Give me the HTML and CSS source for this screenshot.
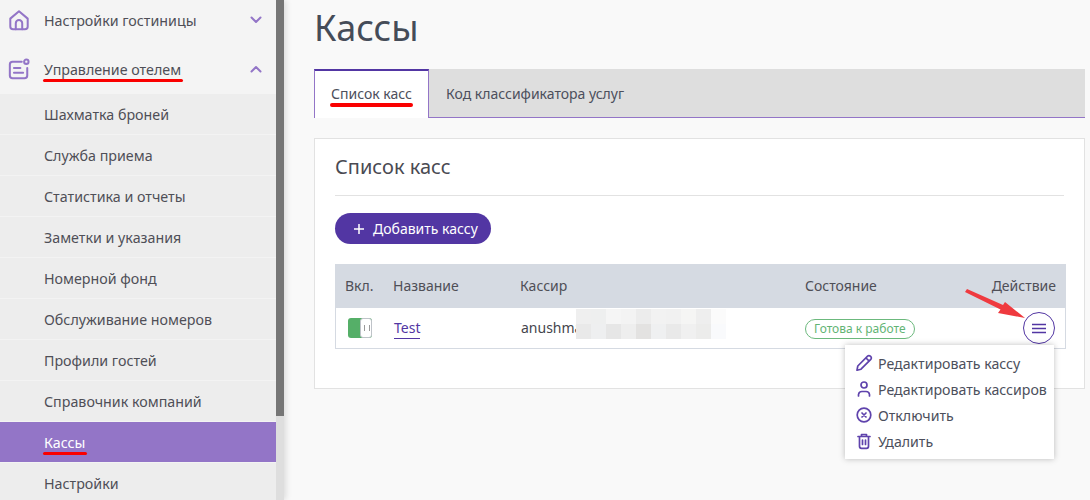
FILE: index.html
```html
<!DOCTYPE html>
<html lang="ru">
<head>
<meta charset="utf-8">
<title>Кассы</title>
<link rel="stylesheet" href="styles.css">
</head>
<body>
<div class="app">
  <aside class="sidebar">
    <nav class="menu">
      <div class="group">
        <svg class="gicon" viewBox="0 0 24 24" fill="none" stroke="#9375c7" stroke-width="2.2" stroke-linejoin="round" stroke-linecap="round"><path d="M2.5 10.5 12 2.5l9.5 8V19a3 3 0 0 1-3 3h-13a3 3 0 0 1-3-3z"/><path d="M8.5 22v-6.5a3.5 3.5 0 0 1 7 0V22"/></svg>
        <span class="glabel">Настройки гостиницы</span>
        <svg class="chev" viewBox="0 0 12 8" fill="none" stroke="#9375c7" stroke-width="2" stroke-linecap="round" stroke-linejoin="round"><path d="M1.5 1.5 6 6l4.5-4.5"/></svg>
      </div>
      <div class="group">
        <svg class="gicon" viewBox="0 0 24 24" fill="none" stroke="#9375c7" stroke-width="2.2" stroke-linecap="round" stroke-linejoin="round"><path d="M15 4H5a3 3 0 0 0-3 3v12a3 3 0 0 0 3 3h13a3 3 0 0 0 3-3v-8"/><circle cx="20" cy="4" r="2.4"/><path d="M6.5 11h7M6.5 16h10"/></svg>
        <span class="glabel"><span class="mark">Управление отелем</span></span>
        <svg class="chev" viewBox="0 0 12 8" fill="none" stroke="#9375c7" stroke-width="2" stroke-linecap="round" stroke-linejoin="round"><path d="M1.5 6.5 6 2l4.5 4.5"/></svg>
      </div>
      <ul class="submenu">
        <li>Шахматка броней</li>
        <li>Служба приема</li>
        <li>Статистика и отчеты</li>
        <li>Заметки и указания</li>
        <li>Номерной фонд</li>
        <li>Обслуживание номеров</li>
        <li>Профили гостей</li>
        <li>Справочник компаний</li>
        <li class="active"><span class="mark">Кассы</span></li>
        <li>Настройки</li>
      </ul>
    </nav>
    <div class="scrollbar"><div class="thumb"></div></div>
  </aside>
  <main class="content">
    <h1 class="title">Кассы</h1>
    <div class="tabs">
      <div class="tab tab-active"><span class="mark">Список касс</span></div>
      <div class="tab">Код классификатора услуг</div>
    </div>
    <section class="panel">
      <h2 class="panel-title">Список касс</h2>
      <button class="add-btn"><svg class="plus" viewBox="0 0 12 12" fill="none" stroke="#fff" stroke-width="1.5"><path d="M6 1v10M1 6h10"/></svg>Добавить кассу</button>
      <div class="table">
        <div class="row head">
          <div>Вкл.</div>
          <div>Название</div>
          <div>Кассир</div>
          <div>Состояние</div>
          <div class="right">Действие</div>
        </div>
        <div class="row body">
          <div><span class="switch"><span class="knob"></span></span></div>
          <div class="lifted"><a class="link">Test</a></div>
          <div class="cashier lifted">anushma
            <svg class="blur" viewBox="0 0 10 2" shape-rendering="crispEdges">
              <rect x="0" y="0" width="1" height="1" fill="#efefef"/><rect x="1" y="0" width="1" height="1" fill="#eeefef"/><rect x="2" y="0" width="1" height="1" fill="#f5f5f5"/><rect x="3" y="0" width="1" height="1" fill="#f3f3f3"/><rect x="4" y="0" width="1" height="1" fill="#ececec"/><rect x="5" y="0" width="1" height="1" fill="#f2f2f2"/><rect x="6" y="0" width="1" height="1" fill="#f1f1f1"/><rect x="7" y="0" width="1" height="1" fill="#f5f5f4"/><rect x="8" y="0" width="1" height="1" fill="#eeeeee"/><rect x="9" y="0" width="1" height="1" fill="#fbfbfb"/>
              <rect x="0" y="1" width="1" height="1" fill="#e9e9e9"/><rect x="1" y="1" width="1" height="1" fill="#eeeff0"/><rect x="2" y="1" width="1" height="1" fill="#e6e6e6"/><rect x="3" y="1" width="1" height="1" fill="#eeeeee"/><rect x="4" y="1" width="1" height="1" fill="#e3e2e1"/><rect x="5" y="1" width="1" height="1" fill="#eff0f1"/><rect x="6" y="1" width="1" height="1" fill="#e9e9e9"/><rect x="7" y="1" width="1" height="1" fill="#f0f0f0"/><rect x="8" y="1" width="1" height="1" fill="#ececeb"/><rect x="9" y="1" width="1" height="1" fill="#f9fafc"/>
            </svg>
          </div>
          <div><span class="badge">Готова к работе</span></div>
          <div class="right"><span class="action"><svg class="burger" viewBox="0 0 14 11" fill="none" stroke="#5236a3" stroke-width="1.6"><path d="M0 1.5h14M0 5.5h14M0 9.5h14"/></svg></span></div>
        </div>
        <svg class="arrow" viewBox="0 0 60 30"><path d="M0 3 2 0 38 16 40 13 60 29 33 24 35.500 20.500z" fill="#ef3a3f"/></svg>
        <ul class="dropdown">
          <li><svg class="ddicon" viewBox="0 0 18 18" fill="none" stroke="#5f43ac" stroke-width="1.7" stroke-linejoin="round"><path d="M2 16.200l.8-4.200L12.600 2.200a1.900 1.900 0 0 1 2.700 0l.5.5a1.900 1.900 0 0 1 0 2.700L6 15.200z"/><path d="M11 4l3.200 3.200"/></svg>Редактировать кассу</li>
          <li><svg class="ddicon" viewBox="0 0 18 18" fill="none" stroke="#5f43ac" stroke-width="1.7" stroke-linecap="round"><circle cx="9" cy="5" r="3"/><path d="M3.500 16v-1.500a3.500 3.500 0 0 1 3.500-3h4a3.500 3.500 0 0 1 3.500 3V16"/></svg>Редактировать кассиров</li>
          <li><svg class="ddicon" viewBox="0 0 18 18" fill="none" stroke="#5f43ac" stroke-width="1.7" stroke-linecap="round"><circle cx="9" cy="9" r="6.800"/><path d="M7 7l4 4M11 7l-4 4"/></svg>Отключить</li>
          <li><svg class="ddicon" viewBox="0 0 18 18" fill="none" stroke="#5f43ac" stroke-width="1.7" stroke-linecap="round" stroke-linejoin="round"><path d="M3 4.500h12M6.500 4.500V2.500h5v2M4.500 4.500v9.800a2 2 0 0 0 2 2h5a2 2 0 0 0 2-2V4.500M7.500 8v4.500M10.500 8v4.500"/></svg>Удалить</li>
        </ul>
      </div>
    </section>
  </main>
</div>
</body>
</html>
```

FILE: styles.css
```css
* { box-sizing: border-box; }
html, body { margin: 0; height: 100%; overflow: hidden; }
body { font-family: "Noto Sans", "Open Sans", sans-serif; color: #4a4a52; background: #f9f9f9; }
ul { list-style: none; margin: 0; padding: 0; }

.app { display: flex; height: 500px; overflow: hidden; }

.sidebar { width: 284px; flex: none; display: flex; height: 500px; box-shadow: 2px 0 6px rgba(0,0,0,.12); z-index: 1; }
.menu { width: 276px; flex: none; background: #f4f4f4; margin-top: -4px; height: 504px; overflow: hidden; }
.group { height: 49px; display: flex; align-items: center; padding: 0 14px 1px 8px; font-size: 14.25px; color: #4f4f57; }
.gicon { width: 22px; height: 22px; flex: none; margin-right: 14px; }
.glabel { flex: 1; }
.chev { width: 12px; height: 8px; flex: none; }

.submenu { background: #ededed; }
.submenu li { height: 41px; display: flex; align-items: center; padding-left: 44px; font-size: 14.25px; color: #4f4f57; border-bottom: 1px solid #f3f3f3; }
.submenu li.active { background: #9375c7; color: #fff; }

.mark { position: relative; display: inline-block; }
.mark::after { content: ""; position: absolute; left: -1.5px; right: -1.5px; bottom: -3.5px; height: 3.5px; border-radius: 2px; background: #fa0000; }

.scrollbar { width: 8px; flex: none; background: #dedede; }
.thumb { height: 416px; background: #767676; }

.content { flex: 1; min-width: 0; padding: 0 5px 0 30px; }
.title { margin: 3px 0 0; height: 66px; font-size: 36px; font-weight: 400; line-height: 49px; color: #454c58; }

.tabs { display: flex; height: 49px; background: #dedede; border-bottom: 1px solid #9375c7; font-size: 14px; }
.tab { padding: 0 17px; display: flex; align-items: center; color: #4c4f5c; }
.tab-active { height: 49px; width: 115px; background: #fff; border: 1px solid #9375c7; border-top: 2px solid #5236a3; border-bottom: 0; padding: 0 16px 2px; }

.panel { margin-top: 20px; height: 251px; background: #fff; border: 1px solid #e2e2e2; padding: 0 20px; }
.panel-title { margin: 0; height: 57px; border-bottom: 1px solid #e2e2e2; font-size: 20px; font-weight: 400; line-height: 56px; color: #4a4a52; }

.add-btn { display: flex; align-items: center; margin-top: 17px; height: 31px; width: 156px; padding: 0 0 0 18px; border: 0; border-radius: 16px; background: #5236a3; color: #fff; font-family: inherit; font-size: 14px; }
.plus { width: 12px; height: 12px; margin-right: 8px; }

.table { position: relative; margin-top: 20px; width: 731px; }
.row { display: grid; grid-template-columns: 48px 127px 285px 1fr 120px; align-items: center; padding: 0 10px; font-size: 14px; }
.head { height: 44px; padding-bottom: 2px; background: #d5dae2; color: #4f4f57; }
.body { height: 41px; background: #fff; border: 1px solid #d5dae2; border-top: 0; padding: 0 9px; grid-template-columns: 49px 127px 284px 1fr 120px; }
.right { text-align: right; }
.lifted { margin-top: -2px; }

.switch { display: block; position: relative; width: 24px; height: 20px; margin-left: 3px; border-radius: 3px; background: #55af68; }
.knob { position: absolute; right: 0; top: 0; width: 12px; height: 20px; background: #fff; border: 1px solid #bfc3c9; border-radius: 3px; }
.knob::after { content: ""; position: absolute; left: 3px; top: 6px; width: 4px; height: 6px; border-left: 1px solid #999; border-right: 1px solid #999; }

.link { color: #5236a3; border-bottom: 1px solid #5236a3; padding-bottom: 1px; }
.cashier { position: relative; color: #45454c; }
.blur { position: absolute; left: 55px; top: -9px; width: 150px; height: 30px; }

.badge { display: inline-block; height: 20px; padding: 0 8px; border: 1px solid #6cb97d; border-radius: 10px; font-size: 12px; line-height: 17px; color: #62b474; }

.action { display: inline-flex; align-items: center; justify-content: center; width: 32px; height: 32px; border: 1px solid #5236a3; border-radius: 50%; background: #fff; margin-right: 1px; vertical-align: middle; }
.burger { width: 14px; height: 11px; }

.arrow { position: absolute; left: 630px; top: 25px; width: 60px; height: 30px; }

.dropdown { position: absolute; left: 510px; top: 81px; width: 209px; height: 114px; padding: 5px 0; background: #fff; box-shadow: 0 0 6px rgba(0,0,0,.25); font-size: 14.17px; color: #4c4f5c; z-index: 2; }
.dropdown li { display: flex; align-items: center; height: 26px; padding-left: 10px; white-space: nowrap; }
.ddicon { width: 18px; height: 18px; flex: none; margin-right: 5px; }
```
